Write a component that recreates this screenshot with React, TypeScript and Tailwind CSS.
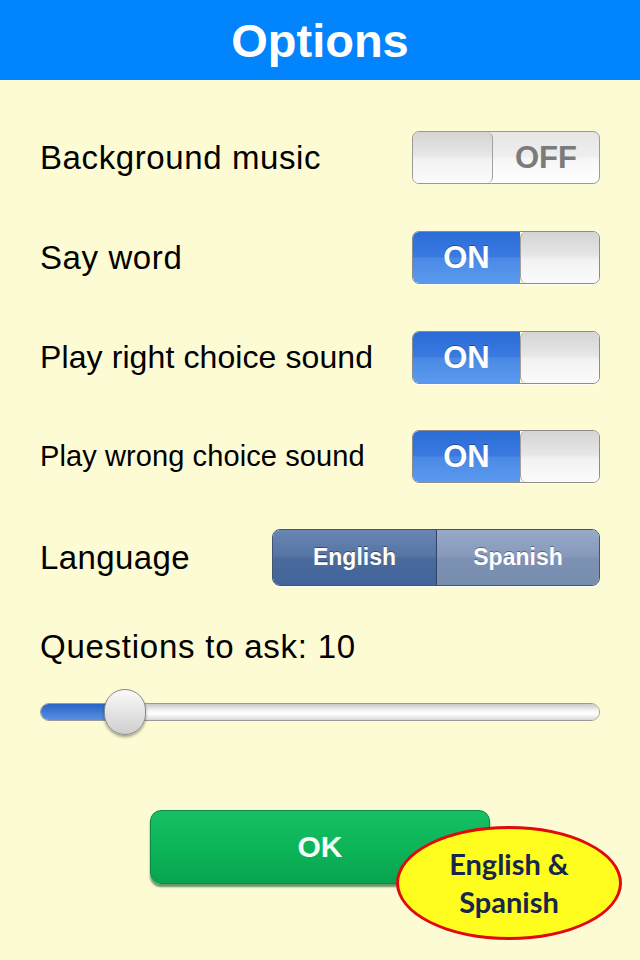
import React from "react";

const font = { fontFamily: '"Liberation Sans", Arial, Helvetica, sans-serif' };

function Switch({ on }: { on: boolean }) {
  if (on) {
    return (
      <div className="flex h-[53px] w-[188px] overflow-hidden rounded-[7px] border border-[#8c8c8c] shadow-[0_1px_0_rgba(255,255,255,0.8)]">
        <div className="flex w-[107px] items-center justify-center bg-[linear-gradient(to_bottom,#2a6cd8_0%,#3a7ae0_48%,#4a8ae6_52%,#5b9aee_100%)]">
          <span className="text-[31px] font-bold leading-none text-white [text-shadow:0_-1px_0_rgba(0,0,0,0.35)]">ON</span>
        </div>
        <div className="flex-1 rounded-l-[6px] border-l border-[#a0a0a0] bg-[linear-gradient(to_bottom,#d4d4d4_0%,#e6e6e6_45%,#f2f2f2_55%,#fbfbfb_100%)]" />
      </div>
    );
  }
  return (
    <div className="flex h-[53px] w-[188px] overflow-hidden rounded-[7px] border border-[#9a9a9a] bg-[linear-gradient(to_bottom,#e6e6e6_0%,#eeeeee_48%,#f6f6f6_52%,#ffffff_100%)]">
      <div className="w-[80px] rounded-r-[6px] border-r border-[#a0a0a0] bg-[linear-gradient(to_bottom,#d4d4d4_0%,#e6e6e6_45%,#f2f2f2_55%,#fbfbfb_100%)]" />
      <div className="flex flex-1 items-center justify-center">
        <span className="text-[31px] font-bold leading-none text-[#7b7b7b]">OFF</span>
      </div>
    </div>
  );
}

export default function App() {
  return (
    <div className="relative h-[960px] w-[640px] overflow-hidden bg-[#fdfbd4]" style={font}>
      <header className="flex h-[80px] items-center justify-center bg-[#0284fd]">
        <h1 className="text-[47px] font-bold leading-none text-white">Options</h1>
      </header>

      <div className="flex flex-col px-[40px] pt-[27px] text-black">
        <div className="flex h-[100px] items-center justify-between">
          <span className="text-[33px] leading-none tracking-[0.6px]">Background music</span>
          <Switch on={false} />
        </div>
        <div className="flex h-[100px] items-center justify-between">
          <span className="text-[33px] leading-none tracking-[0.6px]">Say word</span>
          <Switch on={true} />
        </div>
        <div className="flex h-[100px] items-center justify-between">
          <span className="text-[32px] leading-none tracking-[0.1px]">Play right choice sound</span>
          <Switch on={true} />
        </div>
        <div className="flex h-[98px] items-center justify-between">
          <span className="text-[29px] leading-none tracking-[0.1px]">Play wrong choice sound</span>
          <Switch on={true} />
        </div>
        <div className="flex h-[104px] items-center justify-between">
          <span className="text-[33px] leading-none tracking-[0.4px]">Language</span>
          <div className="flex h-[57px] w-[328px] overflow-hidden rounded-[8px] border border-[#44556f] shadow-[0_1px_0_rgba(255,255,255,0.7)]">
            <div className="flex w-[164px] items-center justify-center border-r border-[#2f4466] bg-[linear-gradient(to_bottom,#6a86b2_0%,#5574a4_48%,#4a6a9c_52%,#42649a_100%)]">
              <span className="text-[23px] font-bold leading-none text-white [text-shadow:0_-1px_0_rgba(0,0,0,0.4)]">English</span>
            </div>
            <div className="flex flex-1 items-center justify-center bg-[linear-gradient(to_bottom,#97aac8_0%,#8699bb_48%,#7c91b4_52%,#778dae_100%)]">
              <span className="text-[23px] font-bold leading-none text-white [text-shadow:0_-1px_0_rgba(0,0,0,0.35)]">Spanish</span>
            </div>
          </div>
        </div>
        <div className="flex h-[74px] items-center">
          <span className="text-[33px] leading-none tracking-[0.75px]">Questions to ask: 10</span>
        </div>
        <div className="relative flex h-[58px] items-center">
          <div className="flex h-[18px] w-full overflow-hidden rounded-full border border-[#9a9a9a]">
            <div className="w-[84px] bg-[linear-gradient(to_bottom,#2a64c4_0%,#3f7ad6_50%,#5a90e0_100%)]" />
            <div className="flex-1 bg-[linear-gradient(to_bottom,#c8c8c8_0%,#f4f4f4_40%,#ffffff_60%,#d8d8d8_100%)]" />
          </div>
          <div className="absolute left-[64px] top-[6px] h-[46px] w-[42px] rounded-full border border-[#8a8a8a] bg-[linear-gradient(to_bottom,#fafafa_0%,#e4e4e4_50%,#cfcfcf_100%)] shadow-[0_2px_3px_rgba(0,0,0,0.35)]" />
        </div>
      </div>

      <div className="mt-[69px] flex justify-center">
        <div className="flex h-[74px] w-[340px] items-center justify-center rounded-[11px] border border-[#0a8a44] bg-[linear-gradient(to_bottom,#16bf63_0%,#0db559_50%,#08a34e_100%)] shadow-[0_3px_2px_rgba(0,80,30,0.6)]">
          <span className="text-[30px] font-bold leading-none text-[#f4fff6]">OK</span>
        </div>
      </div>

      <div className="absolute left-[396px] top-[826px] flex h-[114px] w-[226px] flex-col items-center justify-center rounded-[50%] border-[3px] border-[#e00a0a] bg-[#fffd1e]">
        <span className="text-[29px] font-bold leading-[38px] text-[#17264a]" style={{ fontFamily: 'Lato, "Open Sans", sans-serif' }}>English &amp;</span>
        <span className="text-[29px] font-bold leading-[38px] text-[#17264a]" style={{ fontFamily: 'Lato, "Open Sans", sans-serif' }}>Spanish</span>
      </div>
    </div>
  );
}
